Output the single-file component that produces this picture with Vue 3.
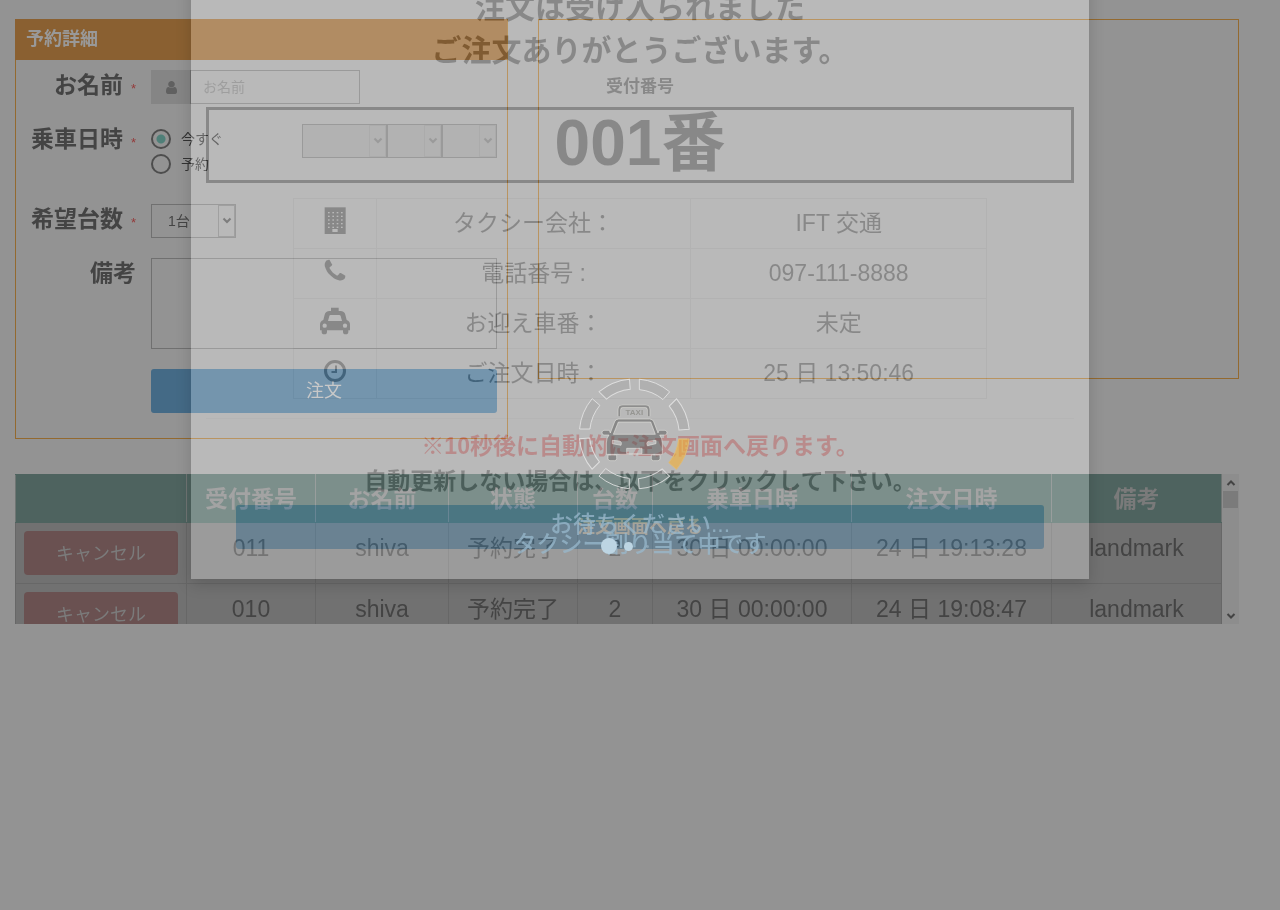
<script setup>
import { ref } from 'vue'

const timing = ref('now')
const orders = [
  { no: '011', name: 'shiva', state: '予約完了', cars: 2, ride: '30 日 00:00:00', placed: '24 日 19:13:28', note: 'landmark' },
  { no: '010', name: 'shiva', state: '予約完了', cars: 2, ride: '30 日 00:00:00', placed: '24 日 19:08:47', note: 'landmark' },
]
const headers = ['', '受付番号', 'お名前', '状態', '台数', '乗車日時', '注文日時', '備考']
const details = [
  { icon: 'building', label: 'タクシー会社：', value: 'IFT 交通' },
  { icon: 'phone', label: '電話番号 :', value: '097-111-8888' },
  { icon: 'taxi', label: 'お迎え車番：', value: '未定' },
  { icon: 'clock', label: 'ご注文日時：', value: '25 日 13:50:46' },
]
const windowCols = [142, 155, 168, 181]
const windowRows = [66, 77, 88, 99, 110]
const segments = [0, 45, 90, 135, 180, 225, 270, 315]
</script>

<template>
  <div class="app">
    <main class="page">
      <div class="columns">
        <form class="panel" @submit.prevent>
          <h2 class="panel-title">予約詳細</h2>
          <div class="fields">
            <label class="label" for="name">お名前<span class="req">*</span></label>
            <div class="name-group">
              <span class="addon">
                <svg width="11" height="13" viewBox="256 128 1280 1536" preserveAspectRatio="none"><path d="M1536 1399q0 109-62.500 187t-150.500 78h-854q-88 0-150.500-78t-62.500-187q0-85 8.500-160.500t31.500-152 58.500-131 94-89 134.500-34.500q131 128 313 128t313-128q76 0 134.500 34.500t94 89 58.500 131 31.500 152 8.500 160.500zm-256-887q0 159-112.500 271.500t-271.500 112.500-271.500-112.500-112.500-271.500 112.500-271.500 271.500-112.500 271.500 112.500 112.500 271.500z" /></svg>
              </span>
              <input id="name" class="text" type="text" placeholder="お名前" />
            </div>

            <span class="label">乗車日時<span class="req">*</span></span>
            <div class="timing">
              <div class="radios">
                <label class="radio"><input v-model="timing" type="radio" name="timing" value="now" />今すぐ</label>
                <label class="radio"><input v-model="timing" type="radio" name="timing" value="later" />予約</label>
              </div>
              <div class="pickers">
                <div v-for="part in ['日', '時', '分']" :key="part" class="select off">
                  <select :aria-label="part" disabled><option></option></select>
                  <span class="arrow"><svg width="10" height="8" viewBox="0 0 10 8"><path d="M1.500 1.500 5 5l3.500-3.500" /></svg></span>
                </div>
              </div>
            </div>

            <label class="label" for="cars">希望台数<span class="req">*</span></label>
            <div class="select cars">
              <select id="cars"><option>1台</option></select>
              <span class="arrow"><svg width="10" height="8" viewBox="0 0 10 8"><path d="M1.500 1.500 5 5l3.500-3.500" /></svg></span>
            </div>

            <label class="label" for="note">備考</label>
            <textarea id="note"></textarea>

            <button class="submit" type="submit">注文</button>
          </div>
        </form>
        <section class="map"></section>
      </div>

      <div class="list">
        <div class="list-view">
          <table class="orders">
            <colgroup><col class="c1" /><col class="c2" /><col class="c3" /><col class="c4" /><col class="c5" /><col class="c6" /><col class="c7" /><col class="c8" /></colgroup>
            <thead>
              <tr><th v-for="h in headers" :key="h">{{ h }}</th></tr>
            </thead>
            <tbody>
              <tr v-for="o in orders" :key="o.no">
                <td><button class="cancel" type="button">キャンセル</button></td>
                <td>{{ o.no }}</td>
                <td>{{ o.name }}</td>
                <td>{{ o.state }}</td>
                <td>{{ o.cars }}</td>
                <td>{{ o.ride }}</td>
                <td>{{ o.placed }}</td>
                <td>{{ o.note }}</td>
              </tr>
            </tbody>
          </table>
        </div>
        <div class="scrollbar">
          <svg width="10" height="8" viewBox="0 0 10 8"><path d="M1.500 6 5 2.500 8.500 6" /></svg>
          <span class="thumb"></span>
          <svg width="10" height="8" viewBox="0 0 10 8"><path d="M1.500 2 5 5.500 8.500 2" /></svg>
        </div>
      </div>
    </main>

    <div class="modal-layer">
      <div class="modal">
        <div class="modal-body">
          <h1>注文は受け入られました<br />ご注文ありがとうございます。</h1>
          <p class="caption">受付番号</p>
          <p class="number">001番</p>
          <table class="details">
            <tbody>
              <tr v-for="d in details" :key="d.icon">
                <td class="icon-cell">
                  <svg v-if="d.icon === 'building'" width="30" height="30" viewBox="118 48 90 90">
                    <path d="M132 52h63v80h-63z" />
                    <template v-for="y in windowRows" :key="y"><rect v-for="x in windowCols" :key="x" class="hole" :x="x" :y="y" width="5" height="4" /></template>
                    <path class="hole" d="M155 117h16v9h-16z" />
                  </svg>
                  <svg v-else-if="d.icon === 'phone'" width="30" height="30" viewBox="-320 -260 2048 2048">
                    <path d="M1408 1112q0 27-10 70.500t-21 68.500q-21 50-122 106-94 51-186 51-27 0-53-3.500t-57.500-12.500-47-14.500-55.500-20.500-49-18q-98-35-175-83-127-79-264-216t-216-264q-48-77-83-175-3-9-18-49t-20.500-55.500-14.500-47-12.500-57.500-3.500-53q0-92 51-186 56-101 106-122 25-11 68.500-21t70.500-10q14 0 21 3 18 6 53 76 11 19 30 54t35 63.500 31 53.500q3 4 17.500 25t21.500 35.500 7 28.500q0 20-28.500 50t-62 55-62 53-28.500 46q0 9 5 22.500t8.500 20.500 14 24 11.500 19q76 137 174 235t235 174q2 1 19 11.500t24 14 20.500 8.500 22.500 5q18 0 46-28.500t53-62 55-62 50-28.500q14 0 28.500 7t35.500 21.500 25 17.500q25 15 53.500 31t63.500 35 54 30q70 35 76 53 3 7 3 21z" />
                  </svg>
                  <svg v-else-if="d.icon === 'taxi'" width="30" height="30" viewBox="120 347 90 90">
                    <path d="M153 352h23v10h5q12 0 15 11l4 16q10 3 10 14v17h-5v4q0 8-8 8t-8-8v-4h-48v4q0 8-8 8t-8-8v-4h-5v-17q0-11 10-14l4-16q3-11 15-11h4z" />
                    <path class="hole" d="M151 374h27q3 0 4 3l4 15h-42l4-15q1-3 3-3z" />
                    <circle class="hole" cx="134" cy="406" r="6.500" /><circle class="hole" cx="195" cy="406" r="6.500" />
                  </svg>
                  <svg v-else width="30" height="30" viewBox="0 0 30 30">
                    <circle class="line" cx="15" cy="15" r="9.500" /><path class="line thin" d="M16 9.500V16h-4.500" />
                  </svg>
                </td>
                <td>{{ d.label }}</td>
                <td>{{ d.value }}</td>
              </tr>
            </tbody>
          </table>
          <hr />
          <p class="note warn">※10秒後に自動的に注文画面へ戻ります。</p>
          <p class="note">自動更新しない場合は、以下をクリックして下さい。</p>
          <button class="back" type="button">注文画面へ戻る</button>
        </div>
      </div>
    </div>

    <div class="loader" role="status">
      <svg class="spinner" width="112" height="112" viewBox="52 54 336 336">
        <path
          v-for="a in segments" :key="a" class="segment" :class="{ lit: a === 90 }"
          :transform="`rotate(${a} 221 222)`"
          d="M236 57.700A165 165 0 0 1 327 95.500L307 118.500A134 134 0 0 0 236 88.800z"
        />
        <g class="car">
          <path class="halo" d="M176 169v-20q0-10 10-10h68q10 0 10 10v20" />
          <path class="outline" d="M176 169v-20q0-10 10-10h68q10 0 10 10v20" />
          <path fill-rule="evenodd" d="M174 177h93q9 0 12 8l13 34 3-8h18q6 0 6 7t-6 7h-16q8 10 8 24v34h-168v-34q0-14 8-24h-15q-6 0-6-7t6-7h16l3 8 13-34q3-8 12-8zM173 186l-15 37h126l-14-37zM155 241v10l26 5q4-11-5-13zM286 241l-24 3q-6 4-2 13l26-6zM198 265v16h46v-16z" />
          <path d="M142 285h26v11q0 6-6 6h-14q-6 0-6-6zM272 285h26v11q0 6-6 6h-14q-6 0-6-6z" />
        </g>
        <text x="221" y="166" text-anchor="middle">TAXI</text>
      </svg>
      <p class="wait">お待ちください...<br />タクシー割り当て中です</p>
      <div class="dots"><span class="dot big"></span><span class="dot mid"></span><span class="dot small"></span></div>
    </div>
  </div>
</template>

<style>
body { margin: 0; background: #939393; }
</style>

<style scoped>
* { box-sizing: border-box; }
.app { position: relative; isolation: isolate; min-height: 100vh; overflow: hidden; background: #939393; color: #444; font: 14px/20px "Liberation Sans", "Noto Sans CJK JP", sans-serif; }
button, input, select, textarea { font: inherit; color: inherit; margin: 0; }
h1, h2, p { margin: 0; }
.page { padding: 19px 41px 0 15px; }
.columns { display: grid; grid-template-columns: 493fr 701fr; gap: 30px; align-items: start; }
.panel { border: 1px solid #93692f; padding-bottom: 25px; }
.panel-title { margin: -1px 0 10px -1px; padding-left: 11px; background: #8a6031; color: #999; font-size: 18px; line-height: 41px; }
.fields { display: grid; grid-template-columns: 120px minmax(0, 1fr); column-gap: 15px; row-gap: 20px; padding-right: 10px; }
.label { height: 32px; text-align: right; font-size: 23px; line-height: 30px; font-weight: bold; white-space: nowrap; }
.req { margin-left: 8px; font-size: 13px; font-weight: normal; color: #943a3a; }
.name-group { display: flex; width: 209px; height: 34px; }
.addon { width: 39px; padding-left: 2px; display: flex; align-items: center; justify-content: center; background: #858585; }
.addon svg { fill: #606060; }
.text { flex: 1; min-width: 0; padding: 0 12px; border: 1px solid #707070; background: none; outline: 0; }
.text::placeholder { color: #757575; opacity: 1; }
.timing { display: flex; justify-content: space-between; height: 60px; }
.radios { padding-top: 2px; }
.radio { display: flex; align-items: center; gap: 10px; height: 25px; color: #333; }
.radio input { appearance: none; width: 20px; height: 20px; border: 2px solid #4d4d4d; border-radius: 50%; }
.radio input:checked { background: radial-gradient(circle, #4f7f78 4px, transparent 5px); }
.pickers { display: flex; }
.select { position: relative; height: 34px; width: 55px; }
.select:first-child, .cars { width: 85px; }
.select select { appearance: none; width: 100%; height: 100%; padding: 0 16px; border: 1px solid #707070; border-radius: 0; background: none; opacity: 1; }
.off select { background: #8b8b8b; }
.arrow { position: absolute; top: 1px; right: 1px; bottom: 1px; width: 17px; display: flex; align-items: center; justify-content: center; border: 1px solid #777; pointer-events: none; }
.arrow svg { fill: none; stroke: #4f4f4f; stroke-width: 2; }
.off .arrow { border-color: #848484; }
.off .arrow svg { stroke: #707070; }
textarea { display: block; width: 100%; height: 91px; padding: 6px 12px; border: 1px solid #707070; background: none; resize: none; outline: 0; }
.submit { grid-column: 2; height: 44px; border: 0; border-radius: 3px; background: #446a86; color: #a5a5a5; font-size: 18px; }
.map { height: 360px; border: 1px solid #93692f; }

.list { display: flex; height: 150px; margin-top: 35px; }
.list-view { flex: 1; overflow: hidden; }
.orders { width: 100%; table-layout: fixed; border-collapse: collapse; background: #717171; font-size: 23px; text-align: center; border: 1px solid #666; }
.orders th, .orders td { border: 1px solid #676767; padding: 0 8px; line-height: 32px; white-space: nowrap; }
.orders th { height: 48px; border-color: #4e635f #6f7573; background: #4e635f; color: #7a7a7a; font-weight: bold; }
.orders td { height: 61px; padding-bottom: 10px; }
.orders td:first-child { padding: 8px; }
.c1 { width: 171px; } .c2 { width: 129px; } .c3 { width: 133px; } .c4 { width: 129px; }
.c5 { width: 75px; } .c6 { width: 199px; } .c7 { width: 200px; }
.cancel { display: block; width: 100%; height: 44px; padding: 2px 0 0; border: 0; border-radius: 4px; background: #6a5151; color: #7b7b7b; font-size: 18px; }
.scrollbar { width: 17px; display: flex; flex-direction: column; align-items: center; padding: 5px 0 4px; background: #8d8d8d; }
.scrollbar svg { fill: none; stroke: #444; stroke-width: 2; }
.thumb { width: 15px; height: 17px; margin: 4px 0 auto; background: #7b7b7b; }

.modal-layer { position: absolute; inset: 0; overflow: hidden; }
.modal { max-width: 898px; margin: -44px auto 0; background: rgb(0 0 0 / .13); box-shadow: 0 5px 15px rgb(0 0 0 / .16); }
.modal-body { padding: 30px 15px; background: #393939; color: #080808; text-align: center; mix-blend-mode: plus-lighter; }
.modal h1 { font-size: 30px; line-height: 43px; font-weight: bold; }
.caption { padding-top: 3px; font-size: 17px; line-height: 24px; font-weight: bold; }
.number { margin-top: 8px; padding-bottom: 4px; border: 3px solid #080808; font-size: 64px; line-height: 66px; font-weight: bold; }
.details { width: 80%; margin: 15px auto 0; table-layout: fixed; border-collapse: collapse; font-size: 23px; }
.details td { height: 50px; padding: 0 0 2px; border: 1px solid #323232; line-height: 32px; }
.details td:nth-child(1) { width: 12%; }
.details td:nth-child(3) { width: 296px; }
.icon-cell svg { display: block; margin: -4px auto 0; fill: #080808; }
.icon-cell .hole { fill: #393939; }
.icon-cell .line { fill: none; stroke: #080808; stroke-width: 3; }
.icon-cell .thin { stroke-width: 2; }
hr { margin: 19px 0 10px; border: 0; border-top: 1px solid #353535; }
.note { font-size: 23px; line-height: 35px; font-weight: bold; }
.warn { color: #390b0b; }
.back { display: block; width: calc(100% - 60px); height: 44px; margin: 6px auto 0; border: 0; border-radius: 3px; background: #082030; color: #444139; font-size: 18px; font-weight: bold; }

.loader { position: absolute; inset: 378px 0 auto; display: flex; flex-direction: column; align-items: center; pointer-events: none; }
.spinner { margin-right: 12px; }
.segment { fill: rgb(130 130 130 / .15); stroke: rgb(232 232 232 / .8); stroke-width: 3; }
.lit { fill: rgb(240 175 60 / .65); stroke: #dfbb77; }
.car { fill: rgb(75 75 75 / .45); stroke: rgb(232 232 226 / .85); stroke-width: 2; }
.car .halo { fill: none; stroke: #d6d6d2; stroke-width: 10; }
.car .outline { fill: none; stroke: #8d8d8d; stroke-width: 6; }
.spinner text { font: bold 24px "Liberation Sans", sans-serif; fill: #969692; }
.wait { margin-top: 24px; color: rgb(152 184 204 / .75); font-size: 23px; line-height: 20px; font-weight: 500; text-align: center; }
.dots { display: flex; align-items: center; gap: 7px; height: 16px; margin: -16px 31px 0 0; }
.dot { border-radius: 50%; background: #bdd5e3; }
.big { width: 16px; height: 16px; }
.mid { width: 9px; height: 9px; }
.small { width: 3px; height: 3px; margin-left: 6px; opacity: .4; }
</style>
